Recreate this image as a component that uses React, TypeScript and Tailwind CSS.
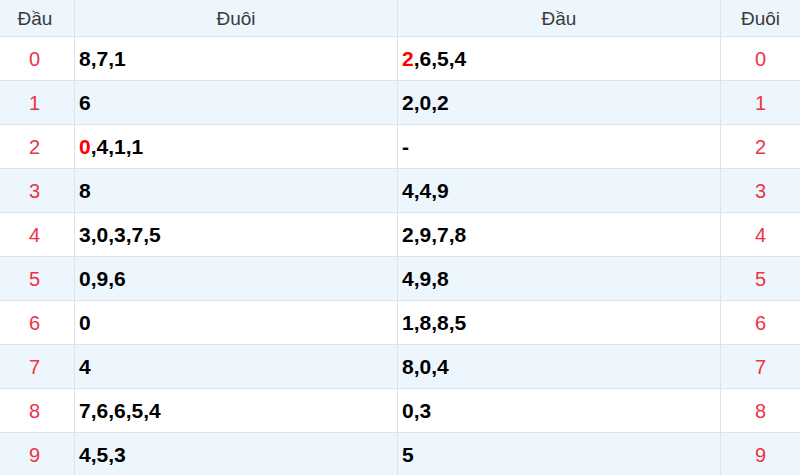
import React from "react";

type Part = { t: string; red?: boolean };
const rows: { d: number; a: Part[]; b: Part[] }[] = [
  { d: 0, a: [{ t: "8,7,1" }], b: [{ t: "2", red: true }, { t: ",6,5,4" }] },
  { d: 1, a: [{ t: "6" }], b: [{ t: "2,0,2" }] },
  { d: 2, a: [{ t: "0", red: true }, { t: ",4,1,1" }], b: [{ t: "-" }] },
  { d: 3, a: [{ t: "8" }], b: [{ t: "4,4,9" }] },
  { d: 4, a: [{ t: "3,0,3,7,5" }], b: [{ t: "2,9,7,8" }] },
  { d: 5, a: [{ t: "0,9,6" }], b: [{ t: "4,9,8" }] },
  { d: 6, a: [{ t: "0" }], b: [{ t: "1,8,8,5" }] },
  { d: 7, a: [{ t: "4" }], b: [{ t: "8,0,4" }] },
  { d: 8, a: [{ t: "7,6,6,5,4" }], b: [{ t: "0,3" }] },
  { d: 9, a: [{ t: "4,5,3" }], b: [{ t: "5" }] },
];

function Parts({ parts }: { parts: Part[] }) {
  return (
    <>
      {parts.map((p, i) => (
        <span key={i} className={p.red ? "text-[#ff0000]" : ""}>
          {p.t}
        </span>
      ))}
    </>
  );
}

export default function App() {
  const font = { fontFamily: '"Liberation Sans", Arial, sans-serif' };
  return (
    <div className="w-[800px] h-[475px] overflow-hidden bg-white" style={font}>
      <div className="grid grid-cols-[75px_323px_323px_79px]">
        {["Đầu", "Đuôi", "Đầu", "Đuôi"].map((h, i) => (
          <div
            key={i}
            className={`h-[37px] flex items-center justify-center pt-[2px] bg-[#edf5fd] border-b border-[#dde3ea] text-[19px] text-[#3a3a3a] ${
              i === 0 ? "pr-[4px]" : ""
            } ${i < 3 ? "border-r" : ""}`}
          >
            {h}
          </div>
        ))}
        {rows.map((r, idx) => {
          const bg = idx % 2 === 1 ? "bg-[#edf5fd]" : "bg-white";
          return (
            <React.Fragment key={r.d}>
              <div
                className={`h-[44px] flex items-center justify-center pr-[5px] border-r border-b border-[#dde3ea] text-[20px] text-[#ee3344] ${bg}`}
              >
                {r.d}
              </div>
              <div
                className={`h-[44px] flex items-center pl-[4px] border-r border-b border-[#dde3ea] text-[21px] font-bold text-black ${bg}`}
              >
                <Parts parts={r.a} />
              </div>
              <div
                className={`h-[44px] flex items-center pl-[4px] border-r border-b border-[#dde3ea] text-[21px] font-bold text-black ${bg}`}
              >
                <Parts parts={r.b} />
              </div>
              <div
                className={`h-[44px] flex items-center justify-center border-b border-[#dde3ea] text-[20px] text-[#ee3344] ${bg}`}
              >
                {r.d}
              </div>
            </React.Fragment>
          );
        })}
      </div>
    </div>
  );
}
